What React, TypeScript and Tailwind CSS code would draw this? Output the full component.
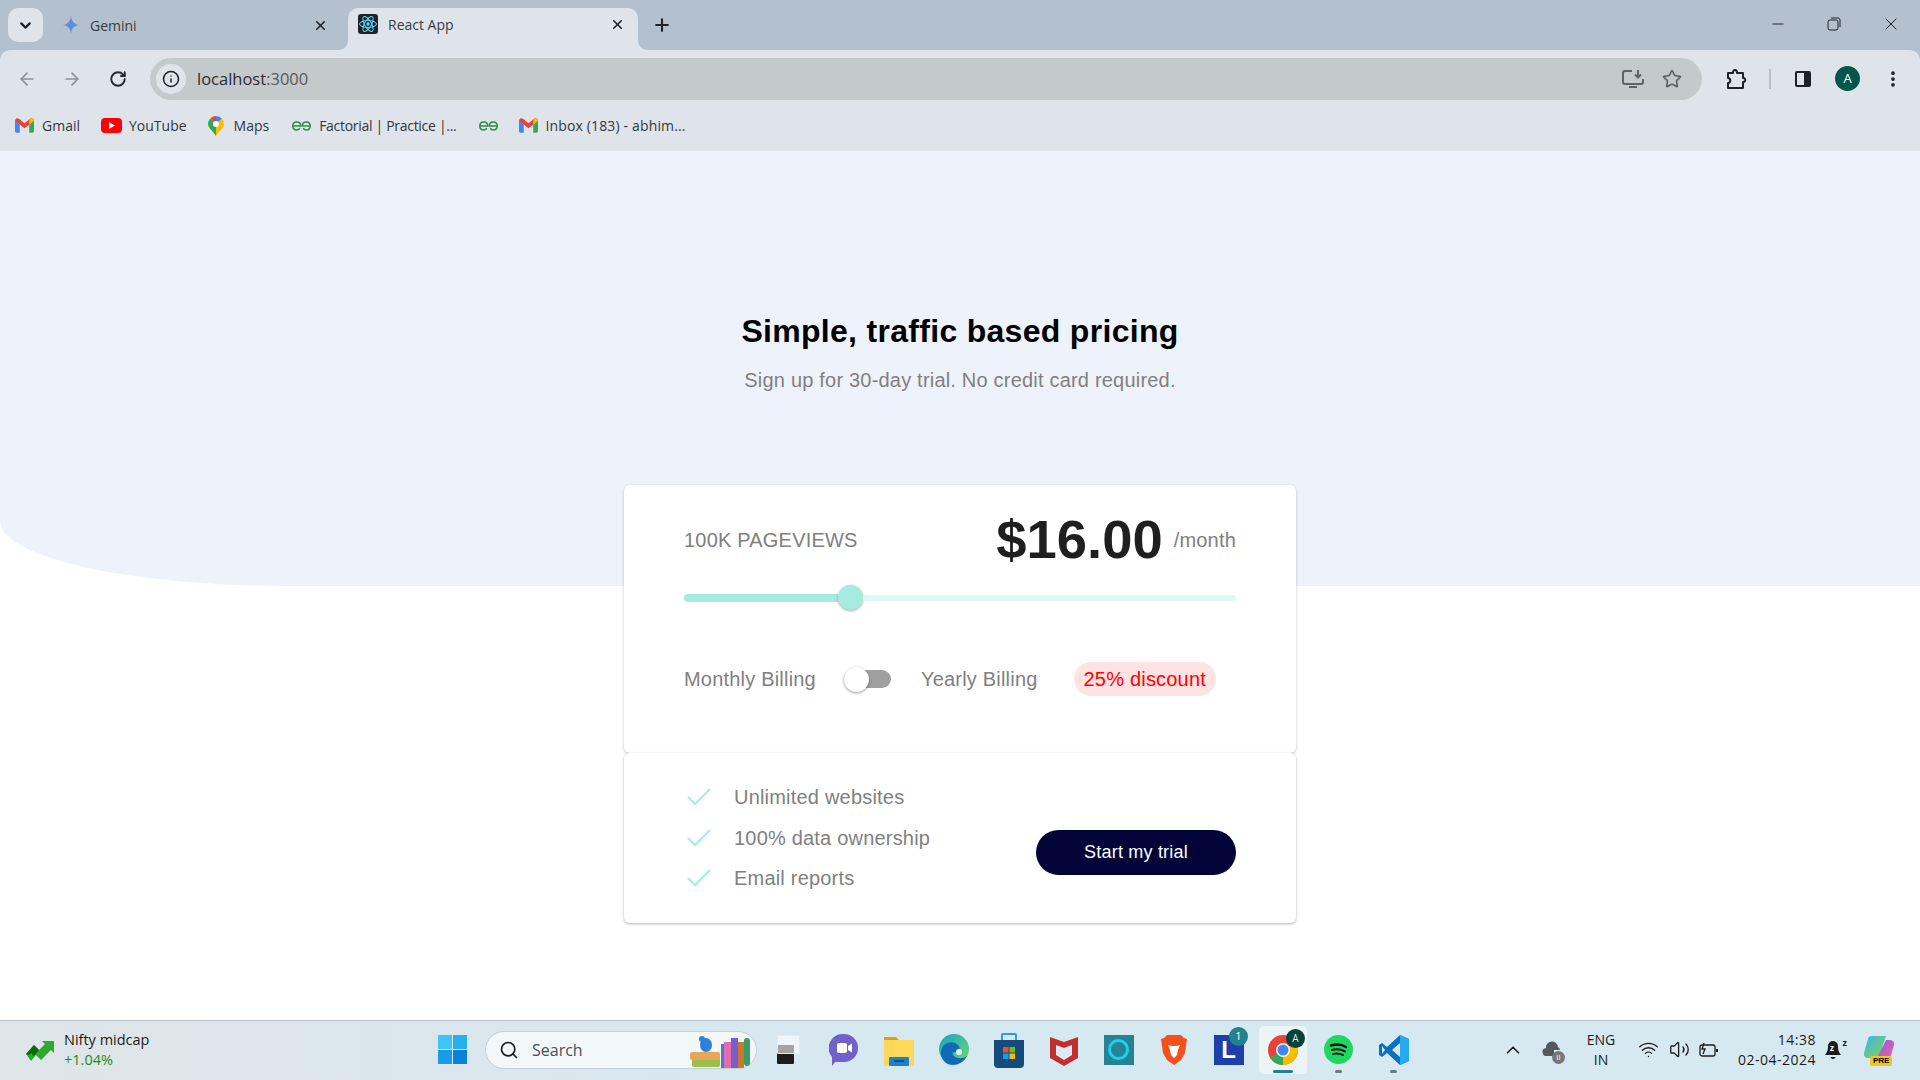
import React from 'react';
import { ArrowLeft, ArrowRight, ChevronDown, ChevronUp, Info, Minus, MoreVertical, Plus, RotateCw, Search, Star, Volume2, Wifi, X } from 'lucide-react';

// Small brand marks used in the browser bars
function GmailIcon() {
  return (
    <svg width="19" height="15" viewBox="0 0 24 18">
      <path d="M0 3v13a2 2 0 0 0 2 2h4V8z" fill="#4285f4" />
      <path d="M18 8v10h4a2 2 0 0 0 2-2V3z" fill="#34a853" />
      <path d="M0 3l6 5 6 4.500L18 8l6-5c0-3-3-4-5-2.500L12 6 5 .5C3-1 0 0 0 3z" fill="#ea4335" />
      <path d="M18 8l6-5c0-3-3-4-5-2.500L18 1.500z" fill="#fbbc04" />
    </svg>
  );
}

function GfgIcon() {
  return (
    <svg width="19" height="10" viewBox="0 0 24 12" fill="none" stroke="#2f8d46" strokeWidth="2">
      <path d="M1 6h10c0-3-2-5-5-5S1 3 1 6s2 5 5 5c2 0 3-1 4-2" />
      <path d="M23 6H13c0-3 2-5 5-5s5 2 5 5-2 5-5 5c-2 0-3-1-4-2" />
    </svg>
  );
}

function ReactIcon() {
  return (
    <svg width="20" height="20" viewBox="0 0 20 20">
      <rect width="20" height="20" rx="3" fill="#20232a" />
      <g fill="none" stroke="#61dafb" strokeWidth="1">
        <ellipse cx="10" cy="10" rx="8.500" ry="3.400" />
        <ellipse cx="10" cy="10" rx="8.500" ry="3.400" transform="rotate(60 10 10)" />
        <ellipse cx="10" cy="10" rx="8.500" ry="3.400" transform="rotate(120 10 10)" />
      </g>
      <circle cx="10" cy="10" r="1.700" fill="#61dafb" />
    </svg>
  );
}

function Bookmark({ icon, label, gap = 'gap-[8px]', className = '' }: { icon: React.ReactNode; label?: string; gap?: string; className?: string }) {
  return (
    <div className={`flex items-center ${gap}`}>
      {icon}
      {label && <span className={className}>{label}</span>}
    </div>
  );
}

function BrowserChrome() {
  return (
    <header className="shrink-0 bg-[#b3c1ce] font-['Open_Sans',sans-serif] text-[#3a3d42]">
      <div className="flex h-[50px] items-start">
        <div className="ml-[8px] mt-[8px] flex h-[34px] w-[35px] items-center justify-center rounded-[10px] bg-[#dfe4ea] text-[#1f1f1f]">
          <ChevronDown size={17} strokeWidth={3} />
        </div>
        <div className="ml-[18px] mt-[8px] flex h-[34px] w-[287px] items-center">
          <svg width="20" height="20" viewBox="0 0 24 24">
            <defs>
              <linearGradient id="gem" x1="0" y1="0" x2="1" y2="1">
                <stop offset="0" stopColor="#7c7fd8" />
                <stop offset="1" stopColor="#3f97f0" />
              </linearGradient>
            </defs>
            <path d="M12 1c.5 7 4 10.500 10 11-6 .5-9.500 4-10 11-.5-7-4-10.500-10-11 6-.5 9.500-4 10-11z" fill="url(#gem)" />
          </svg>
          <span className="ml-[9px] text-[14px]">Gemini</span>
          <X size={15} strokeWidth={2.5} className="ml-auto mr-[20px] text-[#202124]" />
        </div>
        <div className="relative mt-[8px] flex h-[42px] w-[290px] items-start rounded-t-[10px] bg-[#dfe4ea] pl-[10px] pt-[6px]">
          <svg width="10" height="10" viewBox="0 0 10 10" className="absolute bottom-0 left-[-10px]">
            <path d="M10 0v10H0c6 0 10-4 10-10z" fill="#dfe4ea" />
          </svg>
          <svg width="10" height="10" viewBox="0 0 10 10" className="absolute bottom-0 right-[-10px]">
            <path d="M0 0v10h10C4 10 0 6 0 0z" fill="#dfe4ea" />
          </svg>
          <ReactIcon />
          <span className="ml-[10px] text-[14px] leading-[22px]">React App</span>
          <X size={15} strokeWidth={2.5} className="ml-auto mr-[13px] mt-[3px] text-[#202124]" />
        </div>
        <div className="ml-[14px] mt-[15px] text-[#202124]">
          <Plus size={20} strokeWidth={2.5} />
        </div>
        <div className="ml-auto mt-[14px] flex items-center text-[#1f2328]">
          <Minus size={18} strokeWidth={1.2} />
          <svg width="14" height="14" viewBox="0 0 14 14" fill="none" stroke="currentColor" className="ml-[40px]">
            <rect x="1" y="3" width="10" height="10" rx="2" />
            <path d="M4 1h7a2 2 0 0 1 2 2v7" />
          </svg>
          <X size={20} strokeWidth={1.2} className="ml-[40px] mr-[19px]" />
        </div>
      </div>

      <div className="rounded-t-[10px] bg-[#dfe4ea]">
        <div className="flex h-[50px] items-end">
          <ArrowLeft size={20} className="mb-[11px] ml-[17px] text-[#8b9096]" />
          <ArrowRight size={20} className="mb-[11px] ml-[25px] text-[#8b9096]" />
          <RotateCw size={18} strokeWidth={2.5} className="mb-[12px] ml-[27px] text-[#26282b]" />
          <div className="ml-[23px] flex h-[42px] w-[1552px] items-center rounded-full bg-[#c4c9cc] pl-[6px]">
            <div className="flex h-[30px] w-[30px] items-center justify-center rounded-full bg-[#dfe4ea] text-[#202124]">
              <Info size={18} strokeWidth={2} />
            </div>
            <span className="ml-[11px] text-[16.500px] text-[#2b2d30]">
              localhost<span className="text-[#55595d]">:3000</span>
            </span>
            <svg width="22" height="20" viewBox="0 0 22 20" fill="none" stroke="#5f6368" strokeWidth="2" className="ml-auto">
              <path d="M10 2H3a2 2 0 0 0-2 2v9a2 2 0 0 0 2 2h16a2 2 0 0 0 2-2v-3" />
              <path d="M7 18h8M16 1v7M13 5.500l3 3 3-3" />
            </svg>
            <Star size={20} strokeWidth={2} className="ml-[18px] mr-[20px] text-[#5f6368]" />
          </div>
          <div className="mb-[9px] flex items-center text-[#202124]">
            <svg width="22" height="22" viewBox="0 0 22 22" fill="none" stroke="currentColor" strokeWidth="2" className="ml-[23px]">
              <path d="M3 5h5c0-4 4-4 4 0h6v5c3 0 3 4 0 4v6H3v-5c3 0 3-5 0-5z" strokeLinejoin="round" />
            </svg>
            <div className="ml-[22px] h-[20px] w-[2px] bg-[#b3c1ce]" />
            <svg width="18" height="18" viewBox="0 0 18 18" className="ml-[23px]">
              <rect x="1" y="1" width="16" height="16" rx="2" fill="#202124" />
              <rect x="3" y="3" width="7" height="12" fill="#dfe4ea" />
            </svg>
            <div className="ml-[23px] flex h-[25px] w-[25px] items-center justify-center rounded-full bg-[#04564a] text-[13px] text-white">A</div>
            <MoreVertical size={20} strokeWidth={2.5} className="ml-[23px]" />
          </div>
        </div>
        <div className="flex h-[51px] items-center pl-[15px] text-[14px] text-[#33373c]">
          <Bookmark icon={<GmailIcon />} label="Gmail" />
          <div className="ml-[21px]">
            <Bookmark
              gap="gap-[7px]"
              icon={
                <svg width="21" height="15" viewBox="0 0 21 15">
                  <rect width="21" height="15" rx="4" fill="#f00" />
                  <path d="M8 4l6 3.500-6 3.500z" fill="#fff" />
                </svg>
              }
              label="YouTube"
            />
          </div>
          <div className="ml-[21px]">
            <Bookmark
              gap="gap-[10px]"
              icon={
                <svg width="16" height="20" viewBox="0 0 16 20">
                  <path d="M8 20C5 15 0 12 0 8a8 8 0 0 1 2.500-5.800L8 8z" fill="#34a853" />
                  <path d="M2.500 2.200A8 8 0 0 1 8 0v8z" fill="#ea4335" />
                  <path d="M8 0a8 8 0 0 1 6 2.700L8 8z" fill="#4285f4" />
                  <path d="M14 2.700A8 8 0 0 1 16 8c0 4-5 7-8 12V8z" fill="#fbbc04" />
                  <circle cx="8" cy="8" r="3" fill="#fff" />
                </svg>
              }
              label="Maps"
            />
          </div>
          <div className="ml-[23px]">
            <Bookmark icon={<GfgIcon />} label="Factorial | Practice |..." className="tracking-[-0.3px]" />
          </div>
          <div className="ml-[23px]">
            <GfgIcon />
          </div>
          <div className="ml-[21px]">
            <Bookmark gap="gap-[7px]" icon={<GmailIcon />} label="Inbox (183) - abhim..." className="tracking-[0.15px]" />
          </div>
        </div>
      </div>
    </header>
  );
}

function Feature({ label }: { label: string }) {
  return (
    <li className="flex h-[40.500px] items-center">
      <svg width="24" height="18" viewBox="0 0 24 18" fill="none" stroke="#a6ebdf" strokeWidth="2" className="ml-[3px]">
        <path d="M1 9l7 7L23 1" />
      </svg>
      <span className="ml-[23px]">{label}</span>
    </li>
  );
}

function PricingPage() {
  return (
    <main className="min-h-0 flex-1 bg-white font-['Liberation_Sans',Arial,sans-serif]">
      <div className="flex h-[435px] flex-col items-center rounded-bl-[285px_65px] bg-[#eef3fb] pt-[160px]">
        <h1 className="text-[32px] font-bold leading-[40px] tracking-[0.3px] text-black">Simple, traffic based pricing</h1>
        <p className="mt-[15px] text-[20px] leading-[28px] tracking-[0.2px] text-[#808080]">Sign up for 30-day trial. No credit card required.</p>

        <section className="mt-[91px] w-[672px] shrink-0 tracking-[0.2px]">
          <div className="h-[268px] rounded-[6px] bg-white px-[60px] pt-[23px] text-[20px] text-[#808080] shadow-[0_1px_3px_rgba(0,0,0,0.25)]">
            <div className="flex h-[64px] items-center justify-between">
              <span>100K PAGEVIEWS</span>
              <div className="flex items-center">
                <span className="text-[54.400px] font-bold leading-[64px] tracking-normal text-[#1f1f1f]">$16.00</span>
                <span className="ml-[11px]">/month</span>
              </div>
            </div>
            <div className="mt-[13px] flex h-[25px] items-center">
              <div className="h-[8px] w-[154px] rounded-l-full bg-[#a6ebdf]" />
              <div className="h-[25px] w-[25px] rounded-full bg-[#a6ebdf] shadow-[0_1px_3px_rgba(0,0,0,0.35)]" />
              <div className="h-[6px] flex-1 rounded-r-full bg-[#e0f7f3]" />
            </div>
            <div className="mt-[52px] flex h-[34px] items-center">
              <span>Monthly Billing</span>
              <div className="relative ml-[28px] flex h-[25px] w-[47px] items-center">
                <div className="h-[18px] w-full rounded-full bg-[#a0a0a0]" />
                <div className="absolute left-0 top-0 h-[25px] w-[25px] rounded-full bg-white shadow-[0_1px_3px_rgba(0,0,0,0.4)]" />
              </div>
              <span className="ml-[30px]">Yearly Billing</span>
              <span className="ml-[36px] flex h-[34px] items-center rounded-full bg-[#ffe3e3] px-[10px] text-[#ff0000]">25% discount</span>
            </div>
          </div>
          <div className="flex h-[170px] items-start justify-between rounded-[6px] bg-white pl-[60px] pr-[60px] pt-[24px] text-[20px] text-[#808080] shadow-[0_1px_3px_rgba(0,0,0,0.3)]">
            <ul>
              <Feature label="Unlimited websites" />
              <Feature label="100% data ownership" />
              <Feature label="Email reports" />
            </ul>
            <button className="mt-[53px] h-[45px] w-[200px] rounded-full bg-[#020438] text-[18px] text-white">Start my trial</button>
          </div>
        </section>
      </div>
    </main>
  );
}

function Slot({ children, className = '' }: { children: React.ReactNode; className?: string }) {
  return <div className={`relative flex h-[48px] w-[45px] shrink-0 items-center justify-center ${className}`}>{children}</div>;
}

function Dot({ active }: { active?: boolean }) {
  return <span className={`absolute bottom-[1px] h-[3px] rounded-full ${active ? 'w-[20px] bg-[#22808f]' : 'w-[7px] bg-[#6f787d]'}`} />;
}

function Taskbar() {
  return (
    <footer className="flex h-[60px] shrink-0 items-center border-t border-[#b7c3c9] bg-gradient-to-r from-[#dfe5e8] to-[#d6e8f0] to-[45%] pb-[2px] font-['Open_Sans',sans-serif] text-[#1c1c1c]">
      <svg width="29" height="22" viewBox="0 0 29 22" className="ml-[26px]">
        <path d="M0 15l8-9 5 5 6-6-3-3h12v12l-3-3-10 10-5-5-5 6z" fill="#2fa82f" />
        <path d="M0 15l8-9 5 5-5 6-3-3-2 2z" fill="#0b6a0b" />
      </svg>
      <div className="ml-[9px] w-[100px] text-[14.500px] leading-[20px]">
        <div>Nifty midcap</div>
        <div className="text-[#198a1f]">+1.04%</div>
      </div>

      {/* windows logo */}
      <div className="ml-[274px] grid h-[29px] w-[29px] grid-cols-2 gap-[1.500px]">
        <span className="bg-[#3fc4f7]" />
        <span className="bg-[#27aeee]" />
        <span className="bg-[#1a9be5]" />
        <span className="bg-[#0a82d8]" />
      </div>

      <div className="relative ml-[18px] flex h-[38px] w-[272px] items-center rounded-full border border-[#c3d0d6] bg-[#f2f7fa] pl-[13px] text-[16px] text-[#4c4f52]">
        <Search size={20} strokeWidth={2} className="text-[#1c1c1c]" />
        <span className="ml-[13px]">Search</span>
        <svg width="66" height="36" viewBox="0 0 66 36" className="absolute right-0 top-0">
          <rect x="2" y="26" width="28" height="9" rx="2" fill="#9bbf4c" />
          <rect x="0" y="20" width="30" height="8" rx="2" fill="#e7a65a" />
          <ellipse cx="16" cy="13" rx="6" ry="7" fill="#2f80d6" />
          <circle cx="12" cy="7" r="3" fill="#2f80d6" />
          <rect x="31" y="12" width="3" height="24" fill="#4a77d0" />
          <rect x="34" y="10" width="7" height="26" fill="#e56ab0" />
          <rect x="41" y="6" width="7" height="30" fill="#7a5ec8" />
          <rect x="48" y="10" width="6" height="26" fill="#c9792f" />
          <rect x="54" y="6" width="6" height="28" rx="3" fill="#3c9a68" />
        </svg>
      </div>

      <div className="ml-[9px] flex items-center">
        <Slot>
          <div className="relative h-[29px] w-[24px]">
            <div className="absolute bottom-0 left-0 h-[19px] w-[17px] rounded-[1px] bg-[#1d1d1d]" />
            <div className="absolute left-0 top-0 h-[19px] w-[23px] rounded-[1px] border border-[#e8e8e8] bg-white/60" />
          </div>
        </Slot>
        <Slot className="ml-[10px]">
          <svg width="30" height="34" viewBox="0 0 30 34">
            <path d="M15 1a14 14 0 0 1 0 28H6l-3 4v-9A14 14 0 0 1 15 1z" fill="#6f62c8" />
            <rect x="8" y="10" width="10" height="10" rx="2" fill="#fff" />
            <path d="M19 13l4-2.500v9L19 17z" fill="#fff" />
          </svg>
        </Slot>
        <Slot className="ml-[10px]">
          <svg width="30" height="32" viewBox="0 0 30 32">
            <path d="M0 3h12l3 3h15v6H0z" fill="#dca20e" />
            <path d="M0 6h30v26H0z" fill="#fdd85b" />
            <rect x="5" y="23" width="20" height="9" rx="1" fill="#1f7fc9" />
            <rect x="10" y="26" width="10" height="2" fill="#0b4f8a" />
          </svg>
        </Slot>
        <Slot className="ml-[10px]">
          <svg width="30" height="34" viewBox="0 0 30 34">
            <defs>
              <linearGradient id="edge" x1="0" y1="0" x2="1" y2="1">
                <stop offset="0" stopColor="#1aa0c9" />
                <stop offset="1" stopColor="#6fdc6a" />
              </linearGradient>
            </defs>
            <circle cx="15" cy="16" r="15" fill="url(#edge)" />
            <path d="M2 22C1 10 13 6 19 12c3 3 1 7-3 7-3 0-3 2-1 4 3 3 9 3 13 0-3 6-9 9-14 9-7 0-11-5-12-10z" fill="#0f6ab8" />
            <circle cx="20" cy="19" r="3" fill="#e5f0f6" />
          </svg>
        </Slot>
        <Slot className="ml-[10px]">
          <svg width="30" height="36" viewBox="0 0 30 36">
            <path d="M8 8V3a1 1 0 0 1 1-1h12a1 1 0 0 1 1 1v5" fill="none" stroke="#2a9fe0" strokeWidth="2" />
            <path d="M0 8h30v24a4 4 0 0 1-4 4H4a4 4 0 0 1-4-4z" fill="#164a7c" />
            <rect x="9" y="15" width="5.500" height="5.500" fill="#f25022" />
            <rect x="15.500" y="15" width="5.500" height="5.500" fill="#7fba00" />
            <rect x="9" y="21.500" width="5.500" height="5.500" fill="#00a4ef" />
            <rect x="15.500" y="21.500" width="5.500" height="5.500" fill="#ffb900" />
          </svg>
        </Slot>
        <Slot className="ml-[10px]">
          <svg width="28" height="32" viewBox="0 0 28 32">
            <path d="M0 3l14 5 14-5v21l-14 8-14-8z" fill="#c0302f" />
            <path d="M6 11l8 3 8-3v10l-8 5-8-5z" fill="#dfeaf0" />
          </svg>
        </Slot>
        <Slot className="ml-[10px]">
          <div className="flex h-[30px] w-[30px] items-center justify-center bg-[#278292]">
            <div className="h-[21px] w-[21px] rounded-full border-[3px] border-[#19d0f0]" />
          </div>
        </Slot>
        <Slot className="ml-[10px]">
          <svg width="26" height="30" viewBox="0 0 26 30">
            <path d="M6 0h14l3 3 3 1-2 14-4 7-7 5-7-5-4-7L0 4l3-1z" fill="#f4501d" />
            <path d="M7 10l4 1h4l4-1-2 5-1 5-3 3-3-3-1-5z" fill="#fff" />
          </svg>
        </Slot>
        <Slot className="ml-[10px]">
          <div className="flex h-[30px] w-[30px] items-center justify-center bg-[#1e3fa8] font-['Liberation_Sans',sans-serif] text-[24px] font-bold leading-none text-white">L</div>
          <span className="absolute right-[3px] top-[1px] flex h-[19px] w-[19px] items-center justify-center rounded-full bg-[#22808f] text-[11px] text-white">1</span>
        </Slot>
        <Slot className="ml-[8px] w-[48px] rounded-[5px] bg-[#edf4f8]">
          <svg width="30" height="30" viewBox="0 0 30 30">
            <circle cx="15" cy="15" r="15" fill="#ea4335" />
            <path d="M15 15L2 22.500A15 15 0 0 0 15 30z" fill="#34a853" />
            <path d="M15 15v15a15 15 0 0 0 13-22.500z" fill="#fbbc04" />
            <circle cx="15" cy="15" r="7" fill="#fff" />
            <circle cx="15" cy="15" r="5.500" fill="#4285f4" />
          </svg>
          <span className="absolute right-[2px] top-[3px] flex h-[19px] w-[19px] items-center justify-center rounded-full bg-[#04423a] text-[10px] text-[#dfe4ea]">A</span>
          <Dot active />
        </Slot>
        <Slot className="ml-[9px]">
          <svg width="29" height="29" viewBox="0 0 29 29" fill="none" stroke="#111" strokeLinecap="round">
            <circle cx="14.500" cy="14.500" r="14.500" fill="#1ed760" stroke="none" />
            <path d="M7 10.500c5-1.500 11-1 15 1.500" strokeWidth="2.500" />
            <path d="M8 15c4-1 9-.7 13 1.300" strokeWidth="2" />
            <path d="M9 19c3-.8 7-.5 10 1" strokeWidth="1.800" />
          </svg>
          <Dot />
        </Slot>
        <Slot className="ml-[10px]">
          <svg width="30" height="30" viewBox="0 0 30 30">
            <path d="M21 0l9 4v22l-9 4L8 18l-5 4-3-2v-10l3-2 5 4z" fill="#0a72bd" />
            <path d="M21 0l9 4v22l-9 4z" fill="#27a9ef" />
            <path d="M21 8l-8 7 8 7z" fill="#d6e8f0" />
            <path d="M3 11l3 4-3 4z" fill="#d6e8f0" />
          </svg>
          <Dot />
        </Slot>
      </div>

      <div className="ml-auto flex items-center pr-[26px] text-[14px] leading-[20px]">
        <ChevronUp size={22} strokeWidth={1.8} />
        <div className="relative ml-[18px] h-[20px] w-[20px]">
          <svg width="22" height="18" viewBox="0 0 22 18">
            <path d="M5 16a4 4 0 0 1-1-8 6 6 0 0 1 12-1 4 4 0 0 1 2 3H12v6z" fill="#55595c" />
          </svg>
          <span className="absolute bottom-[-4px] right-[-3px] flex h-[13px] w-[13px] items-center justify-center rounded-full bg-[#777] text-[8px] leading-none text-white">II</span>
        </div>
        <div className="ml-[19px] w-[40px] text-center">
          <div>ENG</div>
          <div>IN</div>
        </div>
        <Wifi size={21} strokeWidth={1.5} className="ml-[17px]" />
        <Volume2 size={21} strokeWidth={1.5} className="ml-[10px]" />
        <svg width="20" height="16" viewBox="0 0 20 16" fill="none" stroke="#1c1c1c" strokeWidth="1.300" className="ml-[9px]">
          <rect x="1" y="3" width="15" height="11" rx="2" />
          <path d="M18 7v3" strokeWidth="2" />
          <path d="M5 1L3 7h3l-2 5" />
        </svg>
        <div className="ml-[7px] w-[90px] text-right tracking-[0.5px]">
          <div>14:38</div>
          <div>02-04-2024</div>
        </div>
        <div className="relative ml-[9px] h-[20px] w-[18px]">
          <svg width="17" height="20" viewBox="0 0 17 20">
            <path d="M8 1a5 5 0 0 1 5 5c0 5 1.500 7 3 9H0c1.500-2 3-4 3-9a5 5 0 0 1 5-5z" fill="#1c1c1c" />
            <path d="M5.500 17h5c-.5 2.500-4.500 2.500-5 0z" fill="#1c1c1c" />
          </svg>
          <span className="absolute left-[5px] top-[4px] text-[8px] font-bold leading-[8px] text-white">z</span>
          <span className="absolute right-[-4px] top-[-7px] text-[9px] font-bold">z</span>
        </div>
        <div className="relative ml-[21px] h-[28px] w-[30px]">
          <svg width="30" height="24" viewBox="0 0 30 24">
            <defs>
              <linearGradient id="copA" x1="0" y1="0" x2="1" y2="1">
                <stop offset="0" stopColor="#37b6e9" />
                <stop offset="1" stopColor="#8ad34f" />
              </linearGradient>
              <linearGradient id="copB" x1="0" y1="0" x2="1" y2="1">
                <stop offset="0" stopColor="#8a5be8" />
                <stop offset="1" stopColor="#f0609a" />
              </linearGradient>
            </defs>
            <path d="M8 0h14L16 18a4 4 0 0 1-4 4H4a4 4 0 0 1-4-5L4 3a4 4 0 0 1 4-3z" fill="url(#copA)" />
            <path d="M22 4h4a4 4 0 0 1 4 5l-3 10a4 4 0 0 1-4 3H13z" fill="url(#copB)" />
          </svg>
          <span className="absolute bottom-[-2px] left-[6px] rounded-[2px] bg-[#f6c31c] px-[3px] font-['Liberation_Sans',sans-serif] text-[8px] font-bold leading-[10px] text-black">PRE</span>
        </div>
      </div>
    </footer>
  );
}

export default function App() {
  return (
    <div className="flex h-screen w-full flex-col overflow-hidden">
      <BrowserChrome />
      <PricingPage />
      <Taskbar />
    </div>
  );
}
